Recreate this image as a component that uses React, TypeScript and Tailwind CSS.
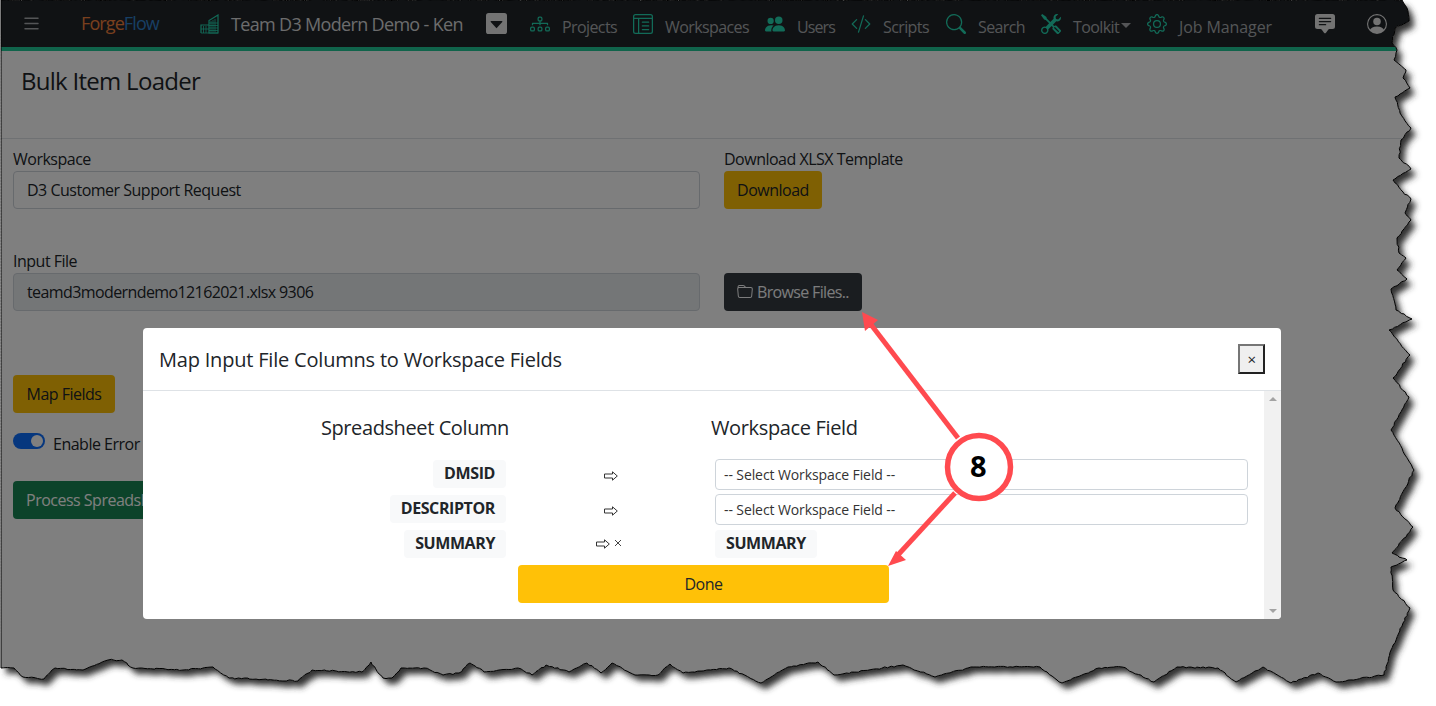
import React from 'react';
import {
  BsCaretDownSquareFill, BsChatSquareTextFill, BsCodeSlash, BsDiagram3, BsFolder,
  BsGear, BsLayoutTextWindowReverse, BsList, BsPeopleFill, BsPersonCircle, BsSearch, BsTools,
} from 'react-icons/bs';

// outline of the torn screenshot, clockwise from the top-left corner
const edge: [number, number][] = [
  [1402, 0], [1407, 8], [1409, 21], [1395, 28], [1392, 43], [1397, 50], [1394, 60], [1406, 70], [1403, 78], [1410, 88],
  [1395, 97], [1400, 113], [1411, 128], [1401, 140], [1399, 158], [1411, 169], [1393, 180], [1403, 192], [1411, 199],
  [1405, 213], [1411, 220], [1397, 238], [1399, 253], [1406, 258], [1397, 270], [1407, 279], [1391, 289], [1396, 310],
  [1412, 319], [1389, 330], [1410, 355], [1393, 378], [1409, 397], [1391, 430], [1414, 470], [1395, 508], [1413, 527],
  [1392, 553], [1407, 560], [1391, 567], [1393, 590], [1410, 608], [1403, 623], [1391, 650], [1384, 675], [1336, 682],
  [1318, 673], [1291, 683], [1263, 667], [1236, 682], [1218, 668], [1177, 667], [1154, 682], [1122, 667], [1099, 668],
  [1062, 683], [1040, 667], [971, 667], [935, 677], [903, 665], [834, 675], [818, 662], [788, 667], [761, 683], [729, 668],
  [683, 673], [670, 664], [658, 675], [635, 675], [612, 663], [601, 673], [587, 663], [569, 672], [546, 665], [532, 675],
  [518, 668], [484, 672], [470, 663], [459, 673], [443, 675], [424, 668], [401, 668], [392, 678], [383, 678], [371, 662],
  [362, 672], [312, 670], [298, 681], [229, 678], [213, 667], [183, 670], [133, 668], [122, 660], [108, 660], [83, 670],
  [55, 668], [44, 679], [23, 677], [14, 668], [1, 668], [1, 0],
];

// break each segment into short wobbly steps so the edge looks ragged
const roughen = (pts: [number, number][]) => {
  let d = 'M1 0';
  let px = 1;
  let py = 0;
  let n = 0;
  for (const [x, y] of pts) {
    const len = Math.hypot(x - px, y - py);
    const steps = Math.max(1, Math.round(len / 3));
    const straight = x === px && x === 1;
    for (let i = 1; i <= steps; i++) {
      n++;
      const t = i / steps;
      const a = i === steps || straight ? 0 : Math.sin(n * 12.9898) * 43758.5453;
      const w = i === steps || straight ? 0 : (a - Math.floor(a) - 0.5) * 1.4;
      const b = Math.sin(n * 78.233) * 12543.123;
      const v = i === steps || straight ? 0 : (b - Math.floor(b) - 0.5) * 1.4;
      d += ` L${(px + (x - px) * t + w).toFixed(1)} ${(py + (y - py) * t + v).toFixed(1)}`;
    }
    px = x;
    py = y;
  }
  return d + ' Z';
};

const torn = roughen(edge);

const CityIcon = () => (
  <svg width="19" height="20" viewBox="0 0 19 20" fill="none" stroke="#24d6b0" strokeWidth="1.2">
    <path d="M9 19V6.5L18 1v18z" />
    <path d="M1 19v-8h8" />
    <path d="M1 19h17M11 7v11M13 6v12M15 5v13M9 9h9M9 11.500h9M9 14h9M9 16.500h9M3.500 12v7M6 12v7M1 15h8" strokeWidth="0.8" />
  </svg>
);

const NavLink = ({ icon, label, w, caret, track = 'tracking-[-0.6px]' }: { icon: React.ReactNode; label: string; w: string; caret?: boolean; track?: string }) => (
  <div className="flex items-center">
    <span className="text-[#24d6b0] text-[20px] w-[32px] flex">{icon}</span>
    <span className={`${w} ${track} text-[16px] text-[#a8abae] mt-[6px] whitespace-nowrap`}>{label}</span>
    {caret && <span className="ml-[5px] mt-[3px] w-0 h-0 border-x-[5.500px] border-x-transparent border-t-[5px] border-t-[#a8abae]" />}
  </div>
);

const Arrow = () => (
  <svg width="14" height="10" viewBox="0 0 14 10" fill="none" stroke="#333" strokeWidth="1" className="inline-block">
    <path d="M0.500 3h8V0.800L13.300 5 8.500 9.200V7h-8z" />
  </svg>
);

const Chip = ({ children }: { children: React.ReactNode }) => (
  <span className="inline-block h-[28px] leading-[27px] px-[11px] bg-[#f8f9fa] rounded font-bold text-[16px] text-[#212529] tracking-[-0.4px]">{children}</span>
);

const SelectBox = () => (
  <div className="h-[31px] w-[533px] border border-[#ced4da] rounded pl-[8px] text-[14px] leading-[29px] text-[#333] tracking-[-0.1px]">-- Select Workspace Field --</div>
);

export default function App() {
  return (
    <div className="relative w-[1436px] h-[706px] overflow-hidden bg-white text-[#212529] font-['Open_Sans','Noto_Sans',sans-serif] tracking-[-0.5px]">
      {/* page under the backdrop */}
      <div className="h-[47px] bg-[#212529] flex items-center pl-[21px]">
        <BsList className="text-[#a8abae] text-[21px] w-[21px]" />
        <span className="ml-[39px] text-[18px] w-[119px] -mt-[1px] tracking-[-0.9px]"><span className="text-[#f2803c]">Forge</span><span className="text-[#2f7fc8]">Flow</span></span>
        <CityIcon />
        <span className="ml-[12px] text-[18px] text-[#d8d9da] w-[255px] mt-[1px] tracking-[-0.67px] whitespace-nowrap">Team D3 Modern Demo - Ken</span>
        <BsCaretDownSquareFill className="text-[#e6e6e6] text-[21px]" />
        <div className="ml-[23px] flex gap-[16px]">
          <NavLink icon={<BsDiagram3 />} label="Projects" w="w-[55px]" />
          <NavLink icon={<BsLayoutTextWindowReverse />} label="Workspaces" w="w-[84px]" />
          <NavLink icon={<BsPeopleFill />} label="Users" w="w-[38px]" track="tracking-[-0.9px]" />
          <NavLink icon={<BsCodeSlash />} label="Scripts" w="w-[47px]" />
          <NavLink icon={<BsSearch />} label="Search" w="w-[47px]" />
          <NavLink icon={<BsTools />} label="Toolkit" w="w-[43px]" caret />
          <NavLink icon={<BsGear />} label="Job Manager" w="w-[93px]" track="tracking-[-0.1px]" />
        </div>
        <BsChatSquareTextFill className="ml-[43px] text-[#e6e6e6] text-[20px]" />
        <BsPersonCircle className="ml-[32px] text-[#e6e6e6] text-[20px]" />
      </div>
      <div className="h-[4px] bg-[#20c997]" />
      <div className="h-[88px] border-b border-[#dee2e6] pl-[21px] pt-[13px] text-[24px] leading-[34px] tracking-[-0.72px]">Bulk Item Loader</div>

      <div className="pl-[13px] pt-[10px] text-[16px]">
        <div className="flex gap-[24px]">
          <div>
            <div className="leading-[21px] h-[21px]">Workspace</div>
            <div className="mt-[1px] w-[687px] h-[38px] border border-[#ced4da] rounded px-[13px] leading-[36px]">D3 Customer Support Request</div>
          </div>
          <div>
            <div className="leading-[21px] h-[21px]">Download XLSX Template</div>
            <button className="mt-[1px] h-[38px] w-[98px] bg-[#ffc107] rounded">Download</button>
          </div>
        </div>
        <div className="flex gap-[24px] mt-[42px]">
          <div>
            <div className="leading-[21px] h-[21px]">Input File</div>
            <div className="mt-[1px] w-[687px] h-[38px] border border-[#ced4da] bg-[#e9ecef] rounded px-[13px] leading-[36px] tracking-[-0.6px]">teamd3moderndemo12162021.xlsx 9306</div>
          </div>
          <button className="mt-[22px] h-[38px] w-[138px] pl-[13px] bg-[#343a40] text-[#f8f9fa] rounded flex items-center gap-[4px] tracking-[-0.65px]"><BsFolder />Browse Files..</button>
        </div>
        <button className="mt-[64px] h-[38px] w-[102px] bg-[#ffc107] rounded block">Map Fields</button>
        <div className="mt-[20px] flex items-center gap-[8px] h-[22px]">
          <span className="w-[32px] h-[16px] rounded-full bg-[#0d6efd] flex justify-end items-center pr-[2px] -mt-[6px]"><span className="w-[12px] h-[12px] rounded-full bg-white" /></span>
          <span>Enable Error Checking</span>
        </div>
        <button className="mt-[26px] h-[38px] px-[13px] bg-[#198754] text-white rounded block">Process Spreadsheet</button>
      </div>

      {/* backdrop */}
      <div className="absolute inset-0 bg-black/50" />

      {/* modal */}
      <div className="absolute left-[143px] top-[328px] w-[1138px] h-[291px] bg-white rounded flex flex-col overflow-hidden">
        <div className="h-[63px] border-b border-[#dee2e6] flex items-center justify-between px-[16px] shrink-0">
          <span className="text-[20px] font-medium tracking-[-0.2px] mt-[2px]">Map Input File Columns to Workspace Fields</span>
          <button className="w-[27px] h-[30px] bg-[#efefef] border-2 border-t-[#767676] border-l-[#767676] border-r-[#222] border-b-[#222] text-[15px] leading-none">×</button>
        </div>
        <div className="flex flex-1 min-h-0">
          <div className="flex-1 flex flex-col items-start">
            <div className="flex h-[74px] items-center text-[20px] font-medium">
              <span className="w-[366px] text-right tracking-[-0.4px]">Spreadsheet Column</span>
              <span className="ml-[202px] tracking-[-0.35px]">Workspace Field</span>
            </div>
            <div className="flex flex-col gap-[7px] -mt-[5px]">
              <div className="flex items-center h-[28px]">
                <span className="w-[363px] text-right"><Chip>DMSID</Chip></span>
                <span className="w-[209px] text-center"><Arrow /></span>
                <SelectBox />
              </div>
              <div className="flex items-center h-[28px]">
                <span className="w-[363px] text-right"><Chip>DESCRIPTOR</Chip></span>
                <span className="w-[209px] text-center"><Arrow /></span>
                <SelectBox />
              </div>
              <div className="flex items-center h-[28px]">
                <span className="w-[363px] text-right"><Chip>SUMMARY</Chip></span>
                <span className="w-[209px] flex items-center justify-center gap-[4px] pr-[3px]">
                  <Arrow />
                  <svg width="8" height="8" viewBox="0 0 8 8" stroke="#444" strokeWidth="1" className="-mt-[3px]"><path d="M1 1l6 6M7 1l-6 6" /></svg>
                </span>
                <Chip>SUMMARY</Chip>
              </div>
            </div>
            <button className="ml-[375px] mt-[7px] w-[371px] h-[38px] bg-[#ffc107] rounded text-[#212529] text-[16px]">Done</button>
          </div>
          <div className="w-[17px] bg-[#f1f1f1] flex flex-col items-center justify-between py-[6px]">
            <span className="w-0 h-0 border-x-[4px] border-x-transparent border-b-[4px] border-b-[#a3a3a3]" />
            <span className="w-0 h-0 border-x-[4px] border-x-transparent border-t-[4px] border-t-[#a3a3a3]" />
          </div>
        </div>
      </div>

      {/* torn edge and callout arrows */}
      <svg className="absolute inset-0 pointer-events-none" width="1436" height="706" viewBox="0 0 1436 706">
        <defs>
          <filter id="blur" x="-5%" y="-5%" width="110%" height="110%"><feGaussianBlur stdDeviation="3" /></filter>
          <clipPath id="outside"><path clipRule="evenodd" d={`M0 0H1436V706H0Z ${torn}`} /></clipPath>
        </defs>
        <path fillRule="evenodd" fill="#fff" d={`M0 0H1436V706H0Z ${torn}`} />
        <g clipPath="url(#outside)"><path d={torn} fill="#333" transform="translate(5 6)" filter="url(#blur)" /></g>
        <path d={torn} fill="none" stroke="#000" strokeWidth="1" />
        <g stroke="#ff4a4f" strokeWidth="5" fill="#ff4a4f">
          <line x1="958" y1="438" x2="869" y2="322" />
          <line x1="955" y1="493" x2="897" y2="556" />
        </g>
        <polygon points="862,312 878,320 865,331" fill="#ff4a4f" />
        <polygon points="888,566 896,551 906,560" fill="#ff4a4f" />
        <circle cx="979" cy="467" r="31.500" fill="#fff" stroke="#ff4a4f" strokeWidth="5.500" />
        <text x="978" y="477" textAnchor="middle" fontFamily="Open Sans, sans-serif" fontWeight="700" fontSize="29" fill="#000">8</text>
      </svg>
    </div>
  );
}
